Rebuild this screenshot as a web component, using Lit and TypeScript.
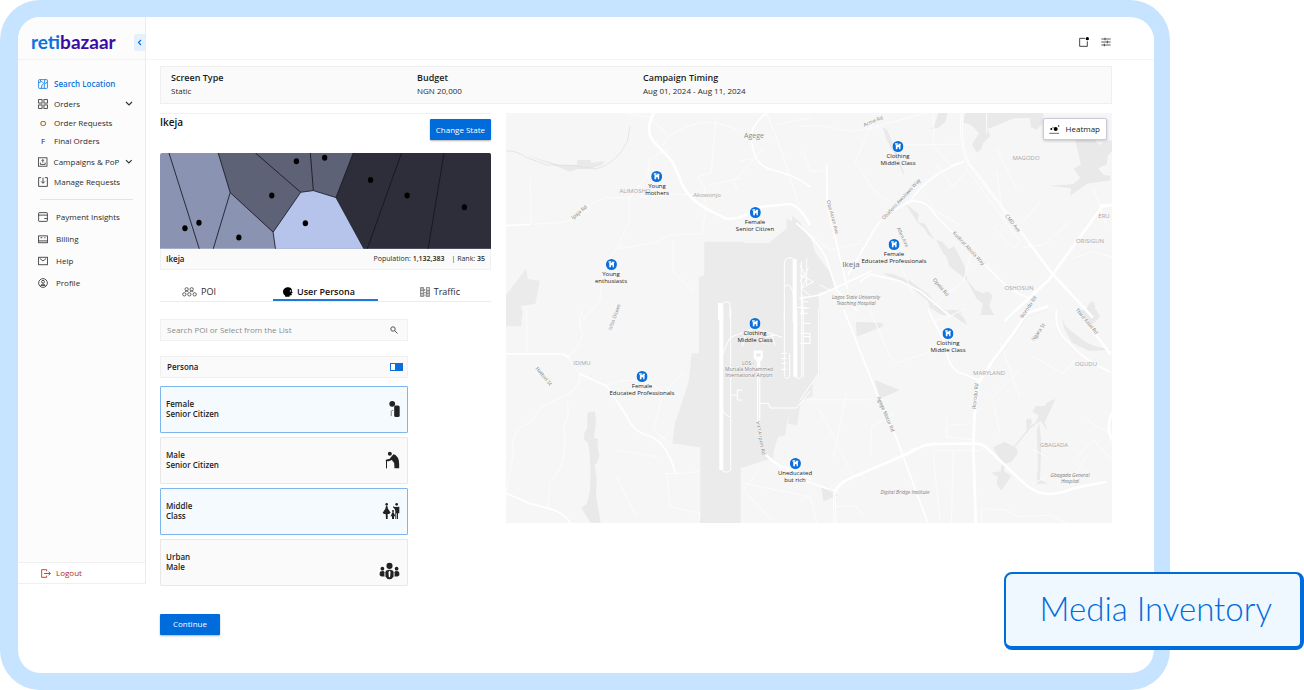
import { LitElement, html, svg, css } from "lit";
import { customElement, state } from "lit/decorators.js";
import { classMap } from "lit/directives/class-map.js";
import { styleMap } from "lit/directives/style-map.js";

const icons: Record<string, unknown> = {
  search: svg`<rect x="1" y="1" width="14" height="14" rx="1"/><path d="M1 6l5-2 4 4 5-3M5 15l2-7M10 8v7M4 1v3M11 1l-1 6"/>`,
  orders: svg`<rect x="1" y="1" width="5.500" height="5.500"/><rect x="9.500" y="1" width="5.500" height="5.500"/><rect x="1" y="9.500" width="5.500" height="5.500"/><rect x="9.500" y="9.500" width="5.500" height="5.500"/>`,
  campaigns: svg`<rect x="1" y="1" width="14" height="14"/><path d="M8 9V4M6 6l2-2 2 2M4 9v3h8V9"/>`,
  manage: svg`<path d="M5 1H1v14h14V1h-4M8 1v9M5 7l3 3 3-3"/>`,
  payment: svg`<rect x="1" y="1" width="14" height="14" rx="1"/><path d="M1 5h14M10 10.500h5"/>`,
  billing: svg`<rect x="1" y="3" width="14" height="11"/><path d="M1 11h14M4 6h3M10 6h2"/>`,
  help: svg`<rect x="1" y="2" width="14" height="12"/><path d="M3 4l5 4 5-4"/>`,
  profile: svg`<circle cx="8" cy="8" r="7"/><circle cx="8" cy="6" r="2.300"/><path d="M4.500 12c1-3 6-3 7 0z"/>`,
};

const primaryNav = [
  { label: "Search Location", icon: "search", active: true },
  { label: "Orders", icon: "orders", opens: true },
  { label: "Order Requests", mark: "O", sub: true },
  { label: "Final Orders", mark: "F", sub: true },
  { label: "Campaigns & PoP", icon: "campaigns", opens: true, gap: true },
  { label: "Manage Requests", icon: "manage" },
];
const secondaryNav = [
  { label: "Payment Insights", icon: "payment" },
  { label: "Billing", icon: "billing" },
  { label: "Help", icon: "help" },
  { label: "Profile", icon: "profile" },
];

const MAP_W = 606;
const MAP_H = 410;

const pins = [
  { x: 151, y: 63, lines: ["Young", "mothers"] },
  { x: 249, y: 99, lines: ["Female", "Senior Citizen"] },
  { x: 105, y: 151, lines: ["Young", "enthusiasts"] },
  { x: 392, y: 33, lines: ["Clothing", "Middle Class"] },
  { x: 388, y: 131, lines: ["Female", "Educated Professionals"] },
  { x: 249, y: 210, lines: ["Clothing", "Middle Class"] },
  { x: 136, y: 263, lines: ["Female", "Educated Professionals"] },
  { x: 442, y: 220, lines: ["Clothing", "Middle Class"] },
  { x: 289, y: 350, lines: ["Uneducated", "but rich"] },
];

type MapLabel = [string, number, number, string, number?];
const mapLabels: MapLabel[] = [
  ["Agege", 248, 22, "town"],
  ["ALIMOSHO", 129, 78, "area"],
  ["Akowonjo", 201, 82, "area"],
  ["Ipaja Rd", 73, 99, "road", -40],
  ["Isiba Oluwo", 108, 204, "road", -70],
  ["Acme Rd", 367, 8, "road", -22],
  ["MAGODO", 520, 45, "area"],
  ["Obafemi Awolowo Way", 395, 86, "road", -47],
  ["Oba Akran Ave", 327, 104, "road", 75],
  ["Allen Ave", 397, 124, "road", 65],
  ["CMD Ave", 507, 110, "road", 52],
  ["Kudirat Abiola Way", 463, 135, "road", 47],
  ["ERU", 598, 103, "area"],
  ["ORISIGUN", 584, 128, "area"],
  ["Ikeja", 345, 150, "city"],
  ["Opebi Rd", 435, 174, "road", 50],
  ["OSHOSUN", 513, 175, "area"],
  ["Lagos State University", 350, 184, "place"],
  ["Teaching Hospital", 350, 190, "place"],
  ["Ikorodu Rd", 522, 194, "road", -56],
  ["Third Axial Rd", 581, 208, "road", 50],
  ["IDIMU", 76, 250, "area"],
  ["Hattori St", 38, 263, "road", 50],
  ["LOS -", 242, 250, "airport"],
  ["Murtala Mohammed", 243, 256, "airport"],
  ["International Airport", 243, 262, "airport"],
  ["Int'l Airport Rd", 255, 325, "road", 80],
  ["Ngara St", 532, 219, "road", -56],
  ["Agege Motor Rd", 380, 301, "road", 67],
  ["MARYLAND", 483, 260, "area"],
  ["Ikorodu Rd", 469, 283, "road", -84],
  ["OGUDU", 580, 251, "area"],
  ["GBAGADA", 548, 332, "area"],
  ["Gbagada General", 564, 362, "place"],
  ["Hospital", 564, 368, "place"],
  ["Digital Bridge Institute", 399, 379, "place"],
];

const personas = [
  {
    lines: ["Female", "Senior Citizen"],
    box: "715 392 34 54",
    w: 11,
    art: svg`<circle cx="725" cy="403" r="9"/><rect x="731" y="408" width="17" height="36" rx="5"/><path d="M722 441v-15q0-3 6-3" fill="none" stroke="#666" stroke-width="2.500"/>`,
  },
  {
    lines: ["Male", "Senior Citizen"],
    box: "706 64 44 54",
    w: 15,
    art: svg`<circle cx="720" cy="72" r="6"/><path d="M708 95v-5l12-3 3-4 8-9q6 0 12 9 6 6 5 33h-14l-1-16-7-9-8 3-1 1z"/><path d="M710 92v24" stroke="#222" stroke-width="3"/>`,
  },
  {
    lines: ["Middle", "Class"],
    box: "695 217 54 52",
    w: 18,
    art: svg`<circle cx="709" cy="223" r="4"/><path d="M707 228h4l2 8 8 12-5 4h-15l-4-4 8-12zM706 252h6v15h-5z"/><circle cx="728" cy="243" r="3"/><path d="M726 247h4l5 12h-4v8h-6v-8h-4z"/><circle cx="739" cy="223" r="4"/><path d="M728 229l6 2 13-1v20h-4v17h-3v-17h-2v17h-3v-24l-2-6-5-5z"/>`,
  },
  {
    lines: ["Urban", "Male"],
    box: "688 394 62 52",
    w: 21,
    low: true,
    art: svg`<circle cx="719" cy="405" r="9"/><path d="M707 424q0-8 12-8t12 8v12q-4 8-12 8t-12-8z"/><path d="M719 419l3 3-1 14-2 3-2-3-1-14z" fill="#fff"/><circle cx="698" cy="413" r="5.500"/><path d="M690 426q0-6 8-6 6 0 6 4v12q-14 1-14-5z"/><circle cx="740" cy="413" r="5.500"/><path d="M748 426q0-6-8-6-6 0-6 4v12q14 1 14-5z"/>`,
  },
];

@customElement("city-map")
class CityMap extends LitElement {
  static styles = css`
    :host { display: block; position: relative; overflow: hidden; background: #f6f6f6; }
    .canvas { display: block; width: 100%; height: auto; }
    .land { fill: #ebebeb; }
    .water { fill: #e9e9e9; }
    .roads { fill: none; stroke: #fff; stroke-linecap: round; stroke-linejoin: round; }
    .minor { stroke-width: 3; stroke: #fcfcfc; }
    .mid { stroke-width: 5; }
    .line { stroke-width: 3; }
    .major { stroke-width: 8; }
    .runway { stroke-width: 12; stroke-linecap: butt; }
    .rail { stroke: #dcdcdc; stroke-width: 2; }
    .label {
      font-family: "Open Sans", "Liberation Sans", sans-serif;
      text-anchor: middle; dominant-baseline: central;
      stroke: #f6f6f6; stroke-width: 1px; paint-order: stroke;
    }
    .town { font-size: 7px; fill: #8c8c8c; }
    .city { font-size: 8px; fill: #707070; }
    .area { font-size: 6px; fill: #a8a8a8; }
    .road { font-size: 5px; fill: #858585; }
    .place { font-size: 5px; fill: #7c7c7c; font-style: italic; }
    .airport { font-size: 5px; fill: #858585; }
    .pin {
      position: absolute; display: grid; justify-items: center; gap: 1px;
      transform: translate(-50%, -5px); padding: 0; border: 0; background: none;
      font: 500 6px/7px "Open Sans", "Liberation Sans", sans-serif; color: #1c1c1c; white-space: nowrap;
    }
    .dot { display: block; width: 11px; height: 11px; }
    .heat {
      position: absolute; top: 5px; right: 5px; display: flex; align-items: center; gap: 6px;
      height: 22px; padding: 0 6px 0 5px; border: 1px solid #c9cbd8; border-radius: 2px;
      background: #fff; box-shadow: 0 1px 3px rgba(0, 0, 0, 0.2);
      font: 500 8px/10px "Open Sans", "Liberation Sans", sans-serif; color: #222; white-space: nowrap;
    }
  `;

  render() {
    return html`
      <svg class="canvas" viewBox="0 0 ${MAP_W} ${MAP_H}" role="img" aria-label="Map of Ikeja">
        <g transform="translate(-6 -8) scale(0.33333)">
          <path class="land" d="M18 570L78 492l6 30 36 5-14 70-42 5v62H18zM613 410h118v4h75l70-56v-26l24 18 18 44 20 20v1400H597V515l16-4z"/>
          <path class="water" d="M75 150l105 30 52-1v-14h40l2 8 42-5-12 12-34 12h-40l-20 8-45-18z"/>
        </g>
        <g transform="translate(294 -8) scale(0.33333)">
          <path class="land" d="M-40 340l40 23 30 30 16 50 45 60 14 48-50 12 2 52H-40z"/>
          <path class="water" d="M415 24h28l-8 28-20 16-24 5 12-10zM495 24h200l-4 16h-50l-60 25-18 6 8 22-22 22-6 20-14 6-13-24 22-32-25-25-22-8zM690 24h40v30l-20 20-18-8zM825 104h60l12 16 26-14 14 2v30l-14 14-2 26-26 12 16 20 20 2v14l-70 10-50 36 2-22-64-8 70-4 22-20-20-26 22-14zM248 66l14 10 30 70 22 64-6-5-20-50-28-50zM316 296l40 30-2 26 20 4 30 48 24 6 18 22 16-8 30 56 10 46 26 30 20 8 18-4 12 12-10 30 14 28h-40l6-34-20-18-26-50-20-18-34-26-8-28-12-14-18-34-26-18-10-18-22-20zM250 504l30 4 50 20 30 22 20 14 34 36 46 30h-34l-36-22-6-20-48-40-46-26-30-10zM860 610l10-20h12l8 40h-34z"/>
        </g>
        <g transform="translate(-6 197) scale(0.33333)">
          <path class="land" d="M18 0h50l-4 30-46-4zM597 0h333v250l-36 40v55l-26-4-6 20-18-52v40l-20 40-18 40-98 46v152H601V432l-84-14 8-60 20-60 22-70 8-80h22z"/>
          <path fill="#f6f6f6" d="M500 -20h97v150h-22l-8 80-22 70-20 60-8 60 84 12v220H400V400z"/>
          <path class="water" d="M262 308l22-4 4 30-6 50 12 4-2 22 6 26-6 20-8 10 6 40-2 50 14 82h-30l-14-22-14-22 16-12 10-40 2-60-4-58-4-26-12-10 2-22 8-10z"/>
          <path class="land" d="M597 130h-22l-8 80-22 70-20 60-8 60 84 12z"/>
          <path fill="#f6f6f6" d="M1020 220l-118 54-10 72-28-4 2-36-10 70-22 4-12 40-2 24-98 30v170h294z"/>
        </g>
        <g transform="translate(294 197) scale(0.33333)">
          <path class="land" d="M-40 0h100l-1 190-46 62-53 36z"/>
          <path class="water" d="M168 36l76 2 8 10-82 32zM224 210l76 30-60 26zM578 412l36-16 36 18 4 16-18 24-20 8-4 22 22 14-30 44-14-20 4-22-22-12 30-4 4-28zM640 410l40-48-2-32 14-6 4 14-8 10 20-10 8-22-18-10 8-18h30l4-10 26-12-20 46-12 24 8 26-20-30-30 22-44 54zM718 340l6 60-4 110 24 10-34 2 4-60-4-100zM440 0h40l22 44-22-12zM786 20l10 28 24 20 40 30 30 12 46 10-70 2-50-24-24-44zM830 0h60l10 20-30 30-20-20zM64 530l50 26-44 18z"/>
        </g>
        <g class="roads" transform="translate(-6 -8) scale(0.33333)">
          <path class="rail" d="M18 138q35-2 60 20 40 12 60 22 80-2 150 12 60-15 94-82l8-45"/>
          <path class="minor" d="M380 25l70 12 50 50M490 120q10-30 70-55 60-30 150 8M505 135l-16 4-40 26-6 50-40 44-12 20-74 0-40 15-40 44-50 14-88 6M90 220l4 132M388 276v70l-34 80-44 60-10 100-52 60M354 430l40-4 80-16 30-20 100-4 14-70-4-70-20-30 40-15 14-160M624 240l100-20M800 25l40 100 56 172M790 130l-90 100 12 22M830 60l100-22M760 160l-40 8M520 410v90l60 60M510 268h60M420 276l90-6"/>
          <path class="mid" d="M800 25q-60 40-42 100 8 58 60 70 60 12 112 50M18 362l72-4"/>
          <path class="major" d="M460 25q-28 60 6 90l42 44q20 26 38 80 22 42 72 72l60 30q50 6 90-34l100-10q30 4 60 60"/>
          <path class="line" d="M853 640V480q0-22 16-22t16 22M668 640v-40q0-10 12-10t10 10v40M853 545q10-10 18 0l14 30M908 630v-60M890 607h30M900 480l20 40-16 30 24 20"/>
          <path class="runway" d="M660 594v50M884 462v190"/>
        </g>
        <g class="roads" transform="translate(294 -8) scale(0.33333)">
          <path class="minor" d="M0 65q60-10 120 10 80 10 140-20l130-34M300 120l180-2M0 150l10-10 20 60 50-5M400 25v95l50 60 40-10M410 180l48 66 40-46M380 280l32 40 66 40M215 60l-50 110 60 90 40 30M0 365l90 70 90-20M500 190l160 220-20 20-60-65M560 25v60M590 130l60 120M810 350l-80 70-60 8M820 460l60-20 56 16M280 430l60 140M400 600l90-70 30-110M60 540l120 60M20 460v80M720 290l-50 60M590 200l20 140M880 250l40 110"/>
          <path class="mid" d="M80 180l2 120 60 250M-10 355q70 60 90 110l30 90 60 60M490 170q-110 40-160 120-90 40-116 100l-70 120M320 290q60-10 86 40l220 220 60 30M180 530l30-22 90 20 60 30 90 75M0 580l60-10 150-70M900 300h36"/>
          <path class="major" d="M486 25q-8 90 20 150l250 330 120 130M936 300l-30 5-160 220-130 120"/>
          <path stroke="#ececec" stroke-width="1.500" d="M486 25q-8 90 20 150l180 240"/>
          <path class="line" d="M4 470v160M0 510l40 20-36 20M0 530l25-40M4 590h20M4 610h24"/>
        </g>
        <g class="roads" transform="translate(-6 197) scale(0.33333)">
          <path class="minor" d="M248 0q-20 40 0 70-10 50-46 72l38 50q6 50-80 80-50 20-60 60l-40 20q-30 30-20 80l-22 120M200 270q14 40-10 80 20 100-40 170l-6 70M550 190l-60 60-30 110 40 30M320 225q110-40 180 30M495 490l60 0 40-6M500 490l10 100 90 20-6 40M466 400l40-30M730 520l200 40M780 480l-50 60 90 96M350 420l120 20M80 0v130M350 500l60 120"/>
          <path class="mid" d="M18 132h170l20 10M240 192l80 36 60 90q20 50 70 60 50 20 76 110M18 550l70 30 60 16q40 10 64 42"/>
          <path class="major" d="M800 436q30 34 80 46l50 24"/>
          <path class="runway" d="M664 0v480M886 0v200"/>
          <path class="line" d="M692 0v480q-10 12-24 2M666 140q20-60 30-60l70-26 80 28M853 0v200q6 10 16 0V130M905 0v200q-10 10-20 0M908 100h22M910 40h20M692 320q-20 0-26-30M692 255h18M726 240h-14v30h14M776 280h30l4 14h80l40-50"/>
          <path fill="#fff" fill-rule="evenodd" d="M762 122h26v22l-8 12v10h-8v-10l-10-12zM768 130v10h14v-10z"/>
          <path stroke-width="10" d="M776 165v165"/><path stroke="#ebebeb" stroke-width="3" d="M776 170v175q0 50 22 90"/>
          <path class="line" d="M845 130h14M845 145h14M845 160h14M845 178h14M780 80l12 20M815 75l10 30M800 80l24-4M735 80l-8 28"/>
        </g>
        <g class="roads" transform="translate(294 197) scale(0.33333)">
          <path class="mid" d="M132 0l106 270 50 110 94 255M385 0l50 100q10 80 50 90l50 20M770 0q-10 60 40 100 40 50 120 86M0 506l70 26 30 8"/>
          <path class="minor" d="M210 0l60 140 24 18 90-30 60-20M384 36l50-10 60-30M470 0l20 20M215 350l70-40M215 350l-4 84M330 418l60-12M400 422h140l20-16M460 420l-6 220M400 440l20 190M290 456l50-30M0 570l30-12 20 80M108 590l60-2 20 30M545 640v-44l70 4 40 20 90-4 60 24M930 370l-70-40M830 440l50-50 56 60M800 530l60-90M440 320v60l80 10M450 345h50l40-50M580 280l20 90M600 100l60 160M700 140l90 50 36-40M740 500l-40 20M60 300l100 200M140 250l-40 190M20 270h190M700 420l40 20M660 180l-90 90"/>
          <path class="major" d="M930 130l-100-130M740-10l-60 20-40 60-60 80-46 70-10 90-4 100 8 250M105 640l-2-90q10-30 50-46l140-60 80-38q30-5 50-4l100-2q30 0 50 26l80 76q50 50 90 50t80-18l92-18M936 310q-20 40 0 80"/>
          <path stroke="#ececec" stroke-width="1.500" d="M70 520l34 30M104 640v-90M740 0l-60 20-40 60-60 80"/>
          <path class="line" d="M56 0v190L0 270M10 0v200M0 10h24M0 70h30v30H0M12 80h20"/>
        </g>
        ${mapLabels.map(
          ([text, x, y, kind, turn]) => svg`<text class="label ${kind}" transform="translate(${x} ${y}) rotate(${turn ?? 0})">${text}</text>`
        )}
      </svg>
      ${pins.map(
        (p) => html`<button
          class="pin"
          style=${styleMap({ left: `${(p.x / MAP_W) * 100}%`, top: `${(p.y / MAP_H) * 100}%` })}
        >
          <svg class="dot" viewBox="0 0 33 33" aria-hidden="true">
            <circle cx="16.500" cy="16.500" r="16.500" fill="#0a6fdc" />
            <path d="M8 7h8v4H8zM18 8h7v4h-7zM10 12h14v13h-4v-6h-5v6h-5z" fill="#fff" />
          </svg>
          <span>${p.lines[0]}<br />${p.lines[1]}</span>
        </button>`
      )}
      <button class="heat">
        <svg width="11" height="9" viewBox="0 0 33 27" aria-hidden="true">
          <circle cx="20" cy="12" r="6" /><circle cx="7" cy="12" r="3" /><circle cx="29" cy="3" r="2" /><circle cx="12" cy="7" r="1.500" />
          <path d="M1 25h29" stroke="#222" stroke-width="2" />
        </svg>
        Heatmap
      </button>
    `;
  }
}

@customElement("app-root")
class AppRoot extends LitElement {
  @state() private picked = new Set([0, 2]);
  @state() private tab = 1;

  static styles = css`
    * { box-sizing: border-box; }
    :host {
      display: block; position: relative; background: #fff; color: #2b2b2b;
      font: 8px/10px "Open Sans", "Liberation Sans", sans-serif;
    }
    button, input { font: inherit; color: inherit; }
    a { color: inherit; text-decoration: none; }
    .frame {
      display: flex; min-height: 100vh; margin-right: 134px;
      border: 17px solid #c6e3ff; border-left-width: 18px; border-right-width: 16px; border-radius: 40px;
      background: #fff;
    }
    .side {
      display: flex; flex: none; flex-direction: column; width: 128px; margin-bottom: 89px;
      border-right: 1px solid #ececec; border-top-left-radius: 22px; background: #fcfcfc;
    }
    .brand {
      display: flex; align-items: center; justify-content: space-between; height: 43px;
      padding: 8px 0 0 13px; border-bottom: 1px solid #f2f2f2;
    }
    .logo { font: 700 19px/20px Lato, sans-serif; color: #3a0ca3; }
    .logo .first { color: #0a74dd; }
    .collapse {
      display: grid; place-items: center; width: 11px; height: 17px; padding: 0; border: 0;
      border-radius: 2px 0 0 2px; background: #e6effc;
    }
    .nav { flex: 1; padding: 14px 12px 0 20px; }
    .list { margin: 0; padding: 0; list-style: none; }
    .item { display: flex; align-items: center; gap: 6px; height: 20px; }
    .item.sub { height: 18px; }
    .item.gap { margin-top: 2px; }
    .list.second { padding-top: 6px; }
    .list.second .item { gap: 8px; height: 22px; }
    .item.active { color: #0a74dd; font-weight: 600; }
    .item .text { flex: 1; white-space: nowrap; }
    .glyph { width: 10px; height: 10px; fill: none; stroke: currentColor; stroke-width: 1.3; }
    .mark { width: 10px; text-align: center; }
    .rule { height: 1px; margin: 7px 0 0 2px; border: 0; background: #e4e4e4; }
    .logout {
      display: flex; align-items: center; gap: 5px; height: 22px; padding-left: 23px;
      border: solid #efefef; border-width: 1px 0; background: #fff; color: #b3261e;
    }
    .main { flex: 1; min-width: 0; }
    .top {
      display: flex; align-items: center; justify-content: flex-end; gap: 12px; height: 43px;
      padding: 8px 43px 0 0; border-bottom: 1px solid #f4f4f4;
    }
    .tool { display: block; padding: 0; border: 0; background: none; line-height: 0; }
    .body { padding: 6px 42px 37px 14px; }
    .summary {
      display: grid; grid-template-columns: 246px 226px 1fr; margin: 0 0 9px; padding: 5px 10px;
      border: 1px solid #efefef; background: #fafafa;
    }
    .term { font-weight: 600; font-size: 9px; line-height: 12px; color: #1c1c1c; }
    .value { margin: 0; line-height: 14px; }
    .columns { display: grid; grid-template-columns: 331px minmax(0, 1fr); gap: 15px; align-items: start; }
    .left { border-top: 1px solid #f1f1f1; }
    .heading { display: flex; justify-content: space-between; align-items: flex-start; padding: 2px 0 13px; }
    .title { margin: 0; font-weight: 600; font-size: 10px; line-height: 12px; color: #111; }
    .primary {
      height: 21px; margin: 3px 0 0; padding: 0 6px; border: 0; border-radius: 1px; background: #006cdb; color: #fff;
      box-shadow: 0 1px 2px rgba(0, 0, 0, 0.3); white-space: nowrap;
    }
    .primary.wide { padding: 0 13px; margin-top: 28px; }
    .region { display: block; width: 100%; height: auto; border-radius: 2px 2px 0 0; }
    .stats {
      display: flex; gap: 7px; align-items: center; height: 21px; padding: 0 5px;
      border: 1px solid #f0f0f0; border-top: 0; background: #fafafa; font-size: 7px;
    }
    .stats .name { flex: 1; font-size: 8px; }
    .stats b { font-weight: 600; color: #1c1c1c; }
    .tabs { display: grid; grid-template-columns: 113px 105px 1fr; height: 32px; border-bottom: 1px solid #ececec; padding-top: 16px; }
    .tab {
      display: flex; align-items: center; justify-content: center; gap: 4px; padding: 0; border: 0;
      border-bottom: 2px solid transparent; background: none; font-size: 9px; white-space: nowrap;
    }
    .tab:first-child { justify-content: flex-start; padding-left: 22px; }
    .tab:last-child { justify-content: flex-end; padding-right: 31px; }
    .tab.on { justify-content: flex-start; padding-left: 10px; border-color: #1f78da; font-weight: 600; color: #111; }
    .picker { width: 75%; margin-top: 17px; }
    .field, .switch {
      display: flex; align-items: center; height: 22px; border: 1px solid #f0f0f0; background: #fafafa;
    }
    .field { padding: 0 9px 0 6px; }
    .input { flex: 1; min-width: 0; padding: 0; border: 0; outline: 0; background: none; }
    .input::placeholder { color: #8c8c8c; opacity: 1; }
    .find { line-height: 0; }
    .switch { justify-content: space-between; margin: 15px 0 8px; padding: 0 4px 0 6px; font-weight: 600; color: #1c1c1c; }
    .toggle {
      appearance: none; width: 13px; height: 8px; margin: 0; border: 1px solid #0a6fdc;
      background: linear-gradient(to right, #fff 40%, #0a6fdc 40%);
    }
    .cards { display: grid; gap: 4px; }
    .card {
      display: flex; align-items: center; justify-content: space-between; height: 47px; padding: 5px 7px 5px 5px;
      border: 1px solid #e8e8e8; border-radius: 1px; background: #fafafa;
      font-weight: 600; text-align: left; color: #1c1c1c;
    }
    .card.on { border-color: #7db5ec; background: #f5faff; }
    .figure { height: 18px; fill: #222; }
    .figure.low { align-self: flex-end; }
    .badge {
      position: absolute; right: 0; bottom: 40px; padding: 13px 28px 17px 34px;
      border: solid #006cdb; border-width: 2px 4px 4px 2px; border-radius: 8px; background: #f0f8ff;
      color: #006cdb; font: 300 33px/42px Lato, sans-serif; white-space: nowrap;
    }
  `;

  private toggleCard(i: number) {
    const next = new Set(this.picked);
    next.has(i) ? next.delete(i) : next.add(i);
    this.picked = next;
  }

  private navItem(n: any) {
    return html`<li>
      <a href="#" class=${classMap({ item: true, active: !!n.active, sub: !!n.sub, gap: !!n.gap })}>
        ${n.icon
          ? html`<svg class="glyph" viewBox="0 0 16 16" aria-hidden="true">${icons[n.icon]}</svg>`
          : html`<span class="mark">${n.mark}</span>`}
        <span class="text">${n.label}</span>
        ${n.opens
          ? html`<svg width="8" height="6" viewBox="0 0 8 6" aria-hidden="true"><path d="M1 1l3 3 3-3" fill="none" stroke="#333" stroke-width="1.200" /></svg>`
          : ""}
      </a>
    </li>`;
  }

  private regionMap() {
    const dots = [[105, 520], [147, 504], [267, 548], [366, 422], [440, 319], [525, 308], [663, 375], [467, 505], [773, 422], [945, 457]];
    return html`<svg class="region" viewBox="30 294 995 288" role="img" aria-label="Regions around Ikeja">
      <path fill="#8a93b2" d="M30 294h995v288H30z" />
      <path fill="#5d6277" d="M205 294h406l-52 134-68-21-38 5-83 120-129-119z" />
      <path fill="#2d2e3a" d="M611 294h414v288H643l-84-154z" />
      <path fill="#b6c3ea" d="M370 532l83-120 38-5 68 21 84 154H377z" />
      <path fill="none" stroke="#14151c" stroke-width="2.500" d="M57 294l91 288M205 294l36 119-51 169M241 413l129 119 7 50M370 532l83-120-136-118M453 412l38-5-9-113M491 407l68 21 52-134M559 428l84 154M756 294L653 582M884 294l-48 288" />
      ${dots.map(([x, y]) => svg`<ellipse cx=${x} cy=${y} rx="8" ry="9"/>`)}
    </svg>`;
  }

  render() {
    const tabs = [
      {
        label: "POI",
        art: html`<svg width="15" height="10" viewBox="0 0 45 30" fill="none" stroke="#444" stroke-width="2.500" aria-hidden="true">
          <circle cx="14" cy="7" r="5" /><circle cx="29" cy="7" r="5" /><circle cx="7" cy="22" r="5" /><circle cx="22" cy="22" r="5" /><circle cx="38" cy="22" r="5" />
          <path d="M9 14q5-5 10 0M24 14q5-5 10 0" /></svg>`,
      },
      {
        label: "User Persona",
        art: html`<svg width="10" height="10" viewBox="0 0 32 32" aria-hidden="true"><path d="M16 1C6 1 0 8 0 16q0 9 7 12v3h14v-4q7 0 8-2l-3-5 5-1-2-5Q29 1 16 1z" /><circle cx="24" cy="13" r="2.500" fill="#fff" /></svg>`,
      },
      {
        label: "Traffic",
        art: html`<svg width="10" height="10" viewBox="0 0 30 30" fill="none" stroke="#444" stroke-width="2" aria-hidden="true">
          <path d="M2 1v28M10 1v28M20 1v28M28 1v28M2 2h8M20 2h8M2 10h8M14 6v6M20 10h8M2 19h8M12 17h6M20 19h8M2 28h8M20 28h8M15 22v6M6 4v4M24 12v4M6 22v4M24 22v4" /></svg>`,
      },
    ];
    return html`
      <div class="frame">
        <aside class="side">
          <div class="brand">
            <a class="logo" href="#"><span class="first">reti</span>bazaar</a>
            <button class="collapse" aria-label="Collapse menu">
              <svg width="5" height="7" viewBox="0 0 5 7"><path d="M4 1L1.500 3.500 4 6" fill="none" stroke="#0a74dd" stroke-width="1.200" /></svg>
            </button>
          </div>
          <nav class="nav">
            <ul class="list">${primaryNav.map((n) => this.navItem(n))}</ul>
            <hr class="rule" />
            <ul class="list second">${secondaryNav.map((n) => this.navItem(n))}</ul>
          </nav>
          <a class="logout" href="#">
            <svg width="10" height="9" viewBox="0 0 30 27" fill="none" stroke="currentColor" stroke-width="2.500" aria-hidden="true">
              <path d="M17 7V2H2v23h15v-5M9 13.500h19M23 8l5 5.500-5 5.500" />
            </svg>
            Logout
          </a>
        </aside>
        <main class="main">
          <header class="top">
            <button class="tool" aria-label="Notifications">
              <svg width="10" height="10" viewBox="0 0 30 30"><path d="M18 4H2v24h23V13" fill="none" stroke="#222" stroke-width="2.500" /><circle cx="25" cy="5" r="5" /></svg>
            </button>
            <button class="tool" aria-label="Filters">
              <svg width="10" height="10" viewBox="0 0 30 30" fill="none" stroke="#222" stroke-width="2.200"><path d="M1 6h28M1 15h28M1 24h28M12 2v8M19 11v8M10 20v8" /></svg>
            </button>
          </header>
          <div class="body">
            <dl class="summary">
              <div><dt class="term">Screen Type</dt><dd class="value">Static</dd></div>
              <div><dt class="term">Budget</dt><dd class="value">NGN 20,000</dd></div>
              <div><dt class="term">Campaign Timing</dt><dd class="value">Aug 01, 2024 - Aug 11, 2024</dd></div>
            </dl>
            <div class="columns">
              <section class="left">
                <div class="heading">
                  <h1 class="title">Ikeja</h1>
                  <button class="primary">Change State</button>
                </div>
                ${this.regionMap()}
                <div class="stats">
                  <b class="name">Ikeja</b>
                  <span>Population: <b>1,132,383</b></span>
                  <span>| Rank: <b>35</b></span>
                </div>
                <div class="tabs" role="tablist">
                  ${tabs.map(
                    (t, i) => html`<button
                      role="tab"
                      aria-selected=${i === this.tab}
                      class=${classMap({ tab: true, on: i === this.tab })}
                      @click=${() => (this.tab = i)}
                    >${t.art}${t.label}</button>`
                  )}
                </div>
                <div class="picker">
                  <div class="field">
                    <input class="input" id="poi" type="text" placeholder="Search POI or Select from the List" />
                    <label class="find" for="poi" aria-label="Search POI">
                      <svg width="8" height="8" viewBox="0 0 8 8" fill="none" stroke="#555"><circle cx="3" cy="3" r="2.200" /><path d="M4.700 4.700L7.500 7.500" /></svg>
                    </label>
                  </div>
                  <div class="switch">
                    <label for="persona">Persona</label>
                    <input class="toggle" id="persona" type="checkbox" checked />
                  </div>
                  <div class="cards">
                    ${personas.map(
                      (p, i) => html`<button
                        class=${classMap({ card: true, on: this.picked.has(i) })}
                        aria-pressed=${this.picked.has(i)}
                        @click=${() => this.toggleCard(i)}
                      >
                        <span>${p.lines[0]}<br />${p.lines[1]}</span>
                        <svg class=${classMap({ figure: true, low: !!p.low })} width=${p.w} viewBox=${p.box} aria-hidden="true">${p.art}</svg>
                      </button>`
                    )}
                  </div>
                </div>
                <button class="primary wide">Continue</button>
              </section>
              <city-map></city-map>
            </div>
          </div>
        </main>
      </div>
      <div class="badge">Media Inventory</div>
    `;
  }
}
